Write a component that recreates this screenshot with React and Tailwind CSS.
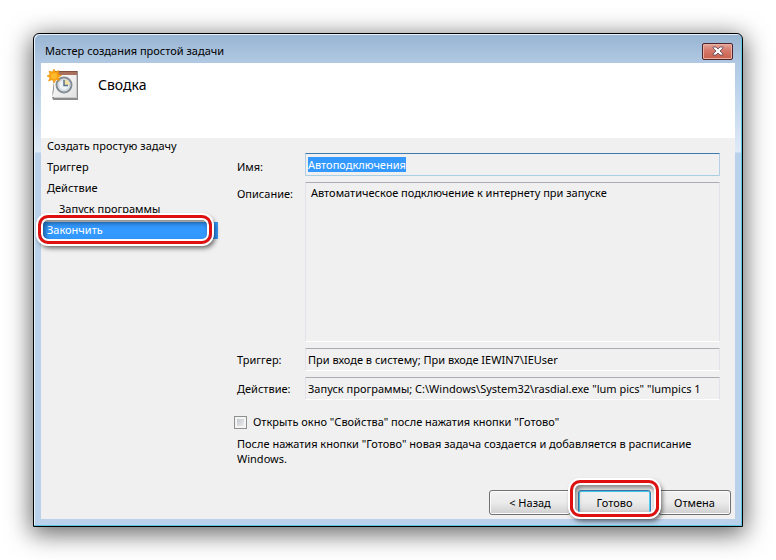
import React from 'react'

const steps = [
  { id: 'create', label: 'Создать простую задачу' },
  { id: 'trigger', label: 'Триггер' },
  { id: 'action', label: 'Действие' },
  { id: 'program', label: 'Запуск программы', nested: true },
  { id: 'finish', label: 'Закончить' },
]

const fieldClasses =
  'block w-full min-w-0 rounded-[1px] border border-x-[#e2e3ea] border-t-[#abadb3] border-b-white bg-[#f0f0f0] px-0.5 text-black focus:outline-none'

const buttonClasses =
  'h-[25px] rounded-[3px] border bg-linear-to-b from-[#f2f2f2] from-0% via-[#ebebeb] via-50% to-[#cfcfcf] to-100%'

const plainButton = `${buttonClasses} border-[#707070] shadow-[inset_0_0_0_1px_#fbfbfb]`
const defaultButton = `${buttonClasses} border-[#3c7fb1] shadow-[inset_0_0_0_1px_#48cdf0]`

function TaskIcon() {
  return (
    <svg viewBox="0 0 32 32" className="h-8 w-8" aria-hidden="true">
      <defs>
        <linearGradient id="page" x1="0" y1="0" x2="1" y2="1">
          <stop offset="0" stopColor="#ffffff" />
          <stop offset="1" stopColor="#e2e2e2" />
        </linearGradient>
      </defs>
      <path d="M8 2h23v29H6l-1-3z" fill="#8b8b8b" />
      <path d="M29 5h1v24H7v-1h22z" fill="#c9c9c9" />
      <path d="M7 4h22v24H4c3-2 3-8 3-14z" fill="url(#page)" />
      <path d="M7 2h23v4H7z" fill="#a9705c" />
      <path d="M7 2h23v1H7z" fill="#7f5040" />
      <circle cx="17" cy="16" r="7.5" fill="#eef3f8" stroke="#858d94" strokeWidth="2" />
      <circle cx="17" cy="16" r="5.500" fill="none" stroke="#c5d0da" />
      <path d="M17 16V10.500a5.500 5.500 0 0 1 5.500 5.500z" fill="#f3dfa0" />
      <path d="M17 11v5.500h4" fill="none" stroke="#56728c" strokeWidth="1.500" />
      <path d="M7 0l1.500 3L12 1.500 11 5l3.500 1.500L11.500 8l1 3.500L9 10.500 7 14 5.500 10.500 1.500 12 3 8.500 0 7l3-1.500-1-3.500L5.500 3z" fill="#f8a313" stroke="#ee8f08" strokeWidth=".6" />
      <circle cx="7" cy="7" r="3" fill="#ffb92e" />
    </svg>
  )
}

function Highlight({ className }) {
  return (
    <span
      aria-hidden="true"
      className={`pointer-events-none absolute rounded-[10px] border-[3px] border-[#df1010] shadow-[0_0_0_2px_#fff,inset_0_0_0_2px_#fff,2px_3px_5px_1px_rgba(0,0,0,0.6),inset_2px_3px_5px_2px_rgba(0,0,0,0.45)] ${className}`}
    />
  )
}

function TitleBar() {
  return (
    <header className="flex h-7 items-center justify-between pl-1">
      <h1 className="pt-1">Мастер создания простой задачи</h1>
      <button
        type="button"
        aria-label="Закрыть"
        className="mt-1 mr-0.5 flex h-[17px] w-[31px] items-center justify-center rounded-[2px] border border-[#4d2229] bg-linear-to-b from-[#e5a69b] from-0% via-[#d4776a] via-45% to-[#c9604a] shadow-[inset_0_0_0_1px_#e9b0a5]"
      >
        <svg viewBox="0 0 12 10" className="h-[10px] w-3" aria-hidden="true">
          <path d="M1 1h3l2 2 2-2h3v1L8 5l3 3v1H8L6 7 4 9H1V8l3-3-3-3z" fill="#fff" stroke="#5b4353" strokeWidth=".8" />
        </svg>
      </button>
    </header>
  )
}

function StepList() {
  return (
    <nav className="w-[177px] shrink-0">
      <ol>
        {steps.map((step) => {
          const active = step.id === 'finish'
          return (
            <li key={step.id} className={`relative mb-1 h-[17px] leading-4 ${step.nested ? 'pl-[18px]' : 'pl-1.5'} ${active ? 'bg-[#3399ff] text-white' : ''}`} aria-current={active ? 'step' : undefined}>
              {step.label}
              {active ? <Highlight className="-top-[7px] right-1.5 -bottom-[5px] -left-[3px]" /> : null}
            </li>
          )
        })}
      </ol>
    </nav>
  )
}

function SummaryForm() {
  return (
    <form id="summary" className="min-w-0 flex-1 pt-[15px] pr-[15px] pl-4" onSubmit={(event) => event.preventDefault()}>
      <div className="grid grid-cols-[68px_minmax(0,1fr)] gap-y-1.5 pl-[3px]">
        <label htmlFor="name" className="pt-1.5">Имя:</label>
        <div className="flex h-[23px] items-center rounded-[1px] border border-x-[#b5cfe7] border-t-[#3d7bad] border-b-[#a9cfe4] px-0.5">
          <input id="name" readOnly size={12} defaultValue="Автоподключения" className="field-sizing-content h-[15px] bg-[#3399ff] text-white focus:outline-none" />
        </div>
        <label htmlFor="description" className="pt-1">Описание:</label>
        <textarea id="description" readOnly defaultValue="Автоматическое подключение к интернету при запуске" className={`${fieldClasses} h-40 resize-none pt-0.5 pl-[5px]`} />
        <label htmlFor="trigger" className="pt-1">Триггер:</label>
        <input id="trigger" readOnly defaultValue="При входе в систему; При входе IEWIN7\IEUser" className={`${fieldClasses} h-[23px]`} />
        <label htmlFor="action" className="pt-1">Действие:</label>
        <input id="action" readOnly defaultValue={'Запуск программы; C:\\Windows\\System32\\rasdial.exe "lum pics" "lumpics 1'} className={`${fieldClasses} h-[23px]`} />
      </div>
      <label className="mt-3.5 flex items-center gap-1.5">
        <input type="checkbox" className="h-[13px] w-[13px] shrink-0 appearance-none border border-[#8e8f8f] bg-linear-to-br from-[#b9bec6] to-[#f6f6f6] shadow-[inset_0_0_0_2px_#f4f4f4]" />
        Открыть окно "Свойства" после нажатия кнопки "Готово"
      </label>
      <p className="mt-1.5 pl-[3px] leading-[15px]">
        После нажатия кнопки "Готово" новая задача создается и добавляется в расписание Windows.
      </p>
    </form>
  )
}

export default function App() {
  return (
    <div className="flex min-h-screen bg-white p-[33px] font-['Noto_Sans','Open_Sans',sans-serif] text-[11px] leading-4 text-black">
      <main className="flex min-w-0 flex-1 flex-col rounded-t-[6px] border border-black bg-[linear-gradient(to_bottom,#98b4d2,#b0c8e2_28px,#b9d1ea_50px,#dfeaf7_118px,#b9d1ea_119px)] px-[7px] pt-px pb-[7px] shadow-[inset_-1px_-1px_0_#5cc8e4,inset_1px_1px_0_#e6f2fb,0_5px_24px_2px_rgba(0,0,0,0.6)]">
        <TitleBar />
        <div className="flex flex-1 flex-col bg-[#f0f0f0]">
          <div className="flex h-[75px] shrink-0 items-start gap-[19px] bg-white pt-1.5 pl-1.5">
            <TaskIcon />
            <h2 className="pt-1.5 text-sm leading-5">Сводка</h2>
          </div>
          <div className="flex flex-1">
            <StepList />
            <SummaryForm />
          </div>
          <footer className="flex justify-end pr-1 pb-1">
            <button type="button" className={`${plainButton} w-[82px]`}>&lt; Назад</button>
            <div className="relative mx-[7px] flex">
              <button type="submit" form="summary" className={`${defaultButton} w-[73px]`}>Готово</button>
              <Highlight className="-inset-x-2 -top-2.5 -bottom-0.5" />
            </div>
            <button type="button" className={`${plainButton} w-[73px]`}>Отмена</button>
          </footer>
        </div>
      </main>
    </div>
  )
}
